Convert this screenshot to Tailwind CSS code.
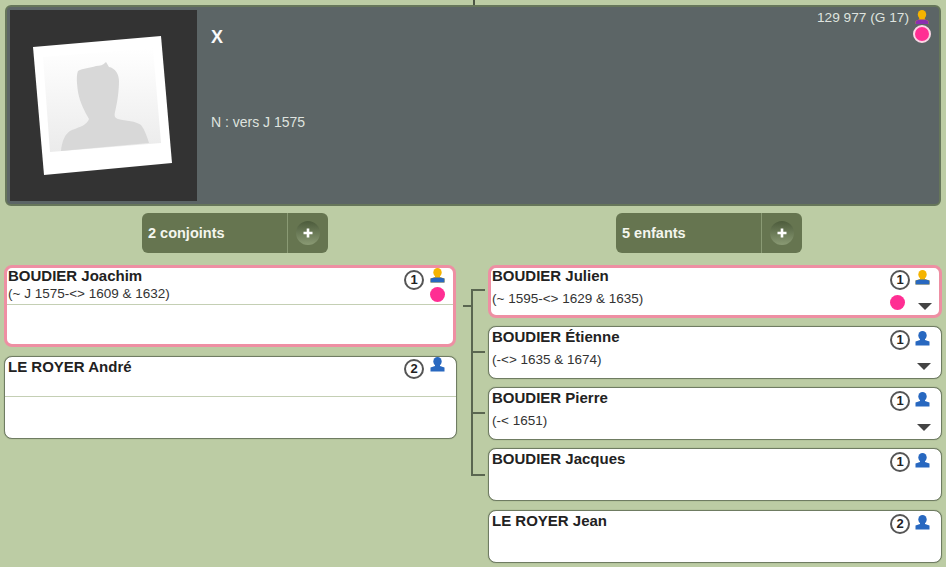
<!DOCTYPE html>
<html>
<head>
<meta charset="utf-8">
<script src="https://cdn.jsdelivr.net/npm/@tailwindcss/browser@4"></script>
</head>
<body class="bg-[#bccca4] font-['Liberation_Sans',Arial,sans-serif] overflow-hidden">
<div class="w-[946px] h-[567px] overflow-hidden flex flex-col">
  <div class="h-[5px] w-[2px] bg-[#4c5545] ml-[473px] shrink-0"></div>
  <div class="mx-[5px] h-[201px] w-[936px] shrink-0 rounded-[6px] border-2 border-[#66765a] bg-[#5c6566] flex p-[3px]">
    <div class="w-[187px] h-[191px] bg-[#333333] shrink-0">
      <svg width="187" height="191" viewBox="10 10 187 191">
        <defs>
          <linearGradient id="g" x1="0" y1="0" x2="0" y2="1"><stop offset="0" stop-color="#ffffff"/><stop offset="1" stop-color="#ebebeb"/></linearGradient>
        </defs>
        <polygon points="33,47 161,36 172,163 44,175" fill="#ffffff"/>
        <polygon points="43,57 153,48 161,143 50,152" fill="url(#g)"/>
        <path d="M61,151 C62,141 65,133 72,130 C80,127 87,125 89,119 C85,112 80,103 78,92 C77,84 76,76 78,71 C83,68 90,68 96,66 C100,66 103,65 106,62 L109,67 C115,68 119,74 119,81 C119,92 117,104 115,112 C114,116 115,118 118,119 C126,121 136,121 141,125 C145,130 147,137 149,143 Z" fill="#d8d8d8"/>
      </svg>
    </div>
    <div class="relative flex-1 pl-[14px] text-white">
      <div class="pt-[15px] h-[104px] text-[18px] leading-[24px] font-bold text-[#fafafa]">X</div>
      <div class="text-[14px] leading-[16px] text-[#dfe3df]">N : vers J 1575</div>
      <div class="absolute right-[5px] top-[-1px] flex items-start gap-[4px]">
        <span class="text-[13.7px] leading-[18px] text-[#dfe3df]">129 977 (G 17)</span>
        <div class="w-[18px] flex flex-col items-center">
          <svg width="14" height="14" viewBox="0 0 14 14" class="mt-[1px]"><ellipse cx="7" cy="4.5" rx="4.2" ry="4.5" fill="#f5b400"/><path d="M4.5,7 L9.5,7 L10,9.5 L13.5,11 L13.5,14 L0.5,14 L0.5,11 L4,9.5 Z" fill="#f5b400"/><path d="M0.5,11 L4,9.6 L10,9.6 L13.5,11 L13.5,14 L0.5,14 Z" fill="#8a2fb0"/></svg>
          <div class="w-[18px] h-[18px] rounded-full bg-[#ff2e93] border-2 border-[#fbd6e6] mt-[1px] box-border"></div>
        </div>
      </div>
    </div>
  </div>
  <div class="flex flex-1 mt-[7px]">
    <div class="w-[463px] shrink-0 pl-[4px]">
      <div class="ml-[138px] w-[186px] h-[40px] rounded-[6px] bg-[#667550] flex items-center">
        <div class="w-[146px] pl-[6px] pt-[2px] h-full border-r border-[#8a9a74] flex items-center text-[14.5px] font-bold text-[#f4f6ee]">2 conjoints</div>
        <div class="flex-1 flex justify-center">
          <div class="w-[24px] h-[24px] rounded-full bg-gradient-to-b from-[#4d5c3c] to-[#8a9a74] flex items-center justify-center">
            <svg width="10" height="10" viewBox="0 0 10 10"><path d="M5,0.5 V9.5 M0.5,5 H9.5" stroke="#ffffff" stroke-width="2.6"/></svg>
          </div>
        </div>
      </div>
      <div class="mt-[12px] w-[452px] h-[82px] rounded-[8px] border-[3px] border-[#ee8fa3] bg-white flex flex-col box-border">
        <div class="h-[37px] border-b border-[#c4cfb4] pl-[1px] pr-[8px] flex justify-between shrink-0">
          <div>
            <div class="text-[15px] leading-[16px] font-bold text-[#222222]">BOUDIER Joachim</div>
            <div class="text-[13.5px] leading-[14px] mt-[3px] text-[#333333]">(~ J 1575-&lt;&gt; 1609 &amp; 1632)</div>
          </div>
          <div class="flex gap-[5px]">
            <div class="mt-[2px] w-[20px] h-[20px] rounded-full border-2 border-[#555555] bg-white flex items-center justify-center text-[13px] font-bold text-[#222222]">1</div>
            <div class="w-[16px] flex flex-col items-center">
              <svg width="15" height="15" viewBox="0 0 15 15"><ellipse cx="7.5" cy="4.5" rx="4.2" ry="4.5" fill="#f5b400"/><path d="M5,7 H10 V9 L14.5,10.5 V14.5 H0.5 V10.5 L5,9 Z" fill="#f5b400"/><path d="M0.5,10.5 L4.5,9.5 L10.5,9.5 L14.5,10.5 V14.5 H0.5 Z" fill="#2868c0"/></svg>
              <div class="w-[15px] h-[15px] rounded-full bg-[#ff2e93] mt-[4px]"></div>
            </div>
          </div>
        </div>
      </div>
      <div class="mt-[9px] w-[453px] h-[83px] rounded-[8px] border border-[#6f7c62] shadow-[0_0_1px_#6f7c62] bg-white flex flex-col box-border">
        <div class="h-[40px] border-b border-[#c4cfb4] pl-[3px] pr-[11px] flex justify-between shrink-0">
          <div class="text-[15px] leading-[16px] mt-[2px] font-bold text-[#222222]">LE ROYER André</div>
          <div class="flex gap-[6px]">
            <div class="mt-[2px] w-[20px] h-[20px] rounded-full border-2 border-[#555555] bg-white flex items-center justify-center text-[13px] font-bold text-[#222222]">2</div>
            <svg width="15" height="15" viewBox="0 0 15 15"><ellipse cx="7.5" cy="4.5" rx="4.2" ry="4.5" fill="#2868c0"/><path d="M5,7 H10 V9 L14.5,10.5 V14.5 H0.5 V10.5 L5,9 Z" fill="#2868c0"/></svg>
          </div>
        </div>
      </div>
    </div>
    <div class="flex-1 flex">
      <div class="w-[25px] shrink-0 flex pt-[76px]">
        <div class="w-[8px] h-[2px] bg-[#5a6650] mt-[16px] shrink-0"></div>
        <div class="w-[14px] h-[187px] border-l-2 border-[#5a6650] flex flex-col justify-between">
          <div class="h-[2px] bg-[#5a6650]"></div>
          <div class="h-[2px] bg-[#5a6650]"></div>
          <div class="h-[2px] bg-[#5a6650]"></div>
          <div class="h-[2px] bg-[#5a6650]"></div>
        </div>
      </div>
      <div class="w-[458px] shrink-0">
        <div class="ml-[128px] w-[186px] h-[40px] rounded-[6px] bg-[#667550] flex items-center">
          <div class="w-[146px] pl-[6px] pt-[2px] h-full border-r border-[#8a9a74] flex items-center text-[14.5px] font-bold text-[#f4f6ee]">5 enfants</div>
          <div class="flex-1 flex justify-center">
            <div class="w-[24px] h-[24px] rounded-full bg-gradient-to-b from-[#4d5c3c] to-[#8a9a74] flex items-center justify-center">
              <svg width="10" height="10" viewBox="0 0 10 10"><path d="M5,0.5 V9.5 M0.5,5 H9.5" stroke="#ffffff" stroke-width="2.6"/></svg>
            </div>
          </div>
        </div>
        <div class="mt-[12px] w-[454px] flex flex-col gap-[8px]">
          <div class="h-[53px] rounded-[8px] border-[3px] border-[#ee8fa3] bg-white pl-[1px] pr-[9px] flex justify-between box-border">
            <div>
              <div class="text-[15px] leading-[16px] font-bold text-[#222222]">BOUDIER Julien</div>
              <div class="text-[13.5px] leading-[14px] mt-[8px] text-[#333333]">(~ 1595-&lt;&gt; 1629 &amp; 1635)</div>
            </div>
            <div class="flex flex-col items-end">
              <div class="flex gap-[5px] pt-[2px]">
                <div class="w-[20px] h-[20px] rounded-full border-2 border-[#555555] bg-white flex items-center justify-center text-[13px] font-bold text-[#222222]">1</div>
                <svg width="15" height="15" viewBox="0 0 15 15"><ellipse cx="7.5" cy="4.5" rx="4.2" ry="4.5" fill="#f5b400"/><path d="M5,7 H10 V9 L14.5,10.5 V14.5 H0.5 V10.5 L5,9 Z" fill="#f5b400"/><path d="M0.5,10.5 L4.5,9.5 L10.5,9.5 L14.5,10.5 V14.5 H0.5 Z" fill="#2868c0"/></svg>
              </div>
              <div class="flex items-end gap-[13px] mt-[5px] mr-[-2px]">
                <div class="w-[15px] h-[15px] rounded-full bg-[#ff2e93]"></div>
                <div class="w-0 h-0 border-x-[7px] border-x-transparent border-t-[7px] border-t-[#444444]"></div>
              </div>
            </div>
          </div>
          <div class="h-[53px] rounded-[8px] border border-[#6f7c62] shadow-[0_0_1px_#6f7c62] bg-white pl-[3px] pr-[11px] flex justify-between box-border">
            <div>
              <div class="text-[15px] leading-[16px] mt-[2px] font-bold text-[#222222]">BOUDIER Étienne</div>
              <div class="text-[13.5px] leading-[14px] mt-[8px] text-[#333333]">(-&lt;&gt; 1635 &amp; 1674)</div>
            </div>
            <div class="flex flex-col items-end">
              <div class="flex gap-[5px] pt-[3px]">
                <div class="w-[20px] h-[20px] rounded-full border-2 border-[#555555] bg-white flex items-center justify-center text-[13px] font-bold text-[#222222]">1</div>
                <svg width="15" height="15" viewBox="0 0 15 15" class="mt-[1px]"><ellipse cx="7.5" cy="4.5" rx="4.2" ry="4.5" fill="#2868c0"/><path d="M5,7 H10 V9 L14.5,10.5 V14.5 H0.5 V10.5 L5,9 Z" fill="#2868c0"/></svg>
              </div>
              <div class="w-0 h-0 border-x-[7px] border-x-transparent border-t-[7px] border-t-[#444444] mt-[13px] mr-[-1px]"></div>
            </div>
          </div>
          <div class="h-[53px] rounded-[8px] border border-[#6f7c62] shadow-[0_0_1px_#6f7c62] bg-white pl-[3px] pr-[11px] flex justify-between box-border">
            <div>
              <div class="text-[15px] leading-[16px] mt-[2px] font-bold text-[#222222]">BOUDIER Pierre</div>
              <div class="text-[13.5px] leading-[14px] mt-[8px] text-[#333333]">(-&lt; 1651)</div>
            </div>
            <div class="flex flex-col items-end">
              <div class="flex gap-[5px] pt-[3px]">
                <div class="w-[20px] h-[20px] rounded-full border-2 border-[#555555] bg-white flex items-center justify-center text-[13px] font-bold text-[#222222]">1</div>
                <svg width="15" height="15" viewBox="0 0 15 15" class="mt-[1px]"><ellipse cx="7.5" cy="4.5" rx="4.2" ry="4.5" fill="#2868c0"/><path d="M5,7 H10 V9 L14.5,10.5 V14.5 H0.5 V10.5 L5,9 Z" fill="#2868c0"/></svg>
              </div>
              <div class="w-0 h-0 border-x-[7px] border-x-transparent border-t-[7px] border-t-[#444444] mt-[13px] mr-[-1px]"></div>
            </div>
          </div>
          <div class="h-[53px] rounded-[8px] border border-[#6f7c62] shadow-[0_0_1px_#6f7c62] bg-white pl-[3px] pr-[11px] flex justify-between box-border">
            <div class="text-[15px] leading-[16px] mt-[2px] font-bold text-[#222222]">BOUDIER Jacques</div>
            <div class="flex gap-[5px] pt-[3px]">
              <div class="w-[20px] h-[20px] rounded-full border-2 border-[#555555] bg-white flex items-center justify-center text-[13px] font-bold text-[#222222]">1</div>
              <svg width="15" height="15" viewBox="0 0 15 15" class="mt-[1px]"><ellipse cx="7.5" cy="4.5" rx="4.2" ry="4.5" fill="#2868c0"/><path d="M5,7 H10 V9 L14.5,10.5 V14.5 H0.5 V10.5 L5,9 Z" fill="#2868c0"/></svg>
            </div>
          </div>
          <div class="h-[53px] mt-[1px] rounded-[8px] border border-[#6f7c62] shadow-[0_0_1px_#6f7c62] bg-white pl-[3px] pr-[11px] flex justify-between box-border">
            <div class="text-[15px] leading-[16px] mt-[2px] font-bold text-[#222222]">LE ROYER Jean</div>
            <div class="flex gap-[5px] pt-[3px]">
              <div class="w-[20px] h-[20px] rounded-full border-2 border-[#555555] bg-white flex items-center justify-center text-[13px] font-bold text-[#222222]">2</div>
              <svg width="15" height="15" viewBox="0 0 15 15" class="mt-[1px]"><ellipse cx="7.5" cy="4.5" rx="4.2" ry="4.5" fill="#2868c0"/><path d="M5,7 H10 V9 L14.5,10.5 V14.5 H0.5 V10.5 L5,9 Z" fill="#2868c0"/></svg>
            </div>
          </div>
        </div>
      </div>
    </div>
  </div>
</div>
</body>
</html>
